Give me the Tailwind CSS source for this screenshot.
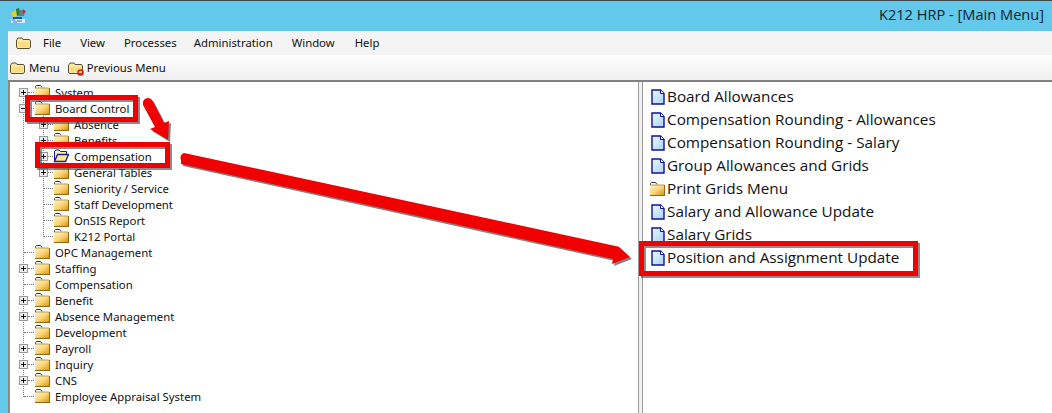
<!DOCTYPE html>
<html lang="en">
<head>
    <meta charset="UTF-8">
    <title>K212 HRP - [Main Menu]</title>
    <script src="https://cdn.jsdelivr.net/npm/@tailwindcss/browser@4"></script>
</head>
<body class="w-[1052px] h-[413px] overflow-hidden bg-white font-['Noto_Sans',sans-serif] text-[11.35px] text-[#111] relative">
    <svg class="absolute w-0 h-0">
        <defs>
            <linearGradient id="fg" x1="0" y1="0" x2="1" y2="1">
                <stop offset="0" stop-color="#fff6cf"/>
                <stop offset="0.5" stop-color="#fbd67a"/>
                <stop offset="1" stop-color="#d9930f"/>
            </linearGradient>
            <linearGradient id="pg" x1="0" y1="0" x2="1" y2="1">
                <stop offset="0" stop-color="#eef8ff"/>
                <stop offset="1" stop-color="#a6d4f2"/>
            </linearGradient>
            <symbol id="folder" viewBox="0 0 16 14">
                <path d="M1.500 3.500V1.500L2.500 .5h4l1.500 2" fill="#fff" stroke="#23287e"/>
                <path d="M1 3h14.500v10H1z" fill="url(#fg)"/>
                <path d="M1 13.500h15M15.500 3v10" stroke="#8c6a12"/>
                <path d="M1 3h14" stroke="#b79b52"/>
            </symbol>
            <symbol id="menufolder" viewBox="0 0 15 12">
                <path d="M1 2.500L2 1h4l1 1.500h6.500L14.500 4v6l-1 1.500h-12L.5 10V3z" fill="#fde9a0" stroke="#5a5030"/>
                <path d="M2 5h11v5H2z" fill="#fbdc80"/>
            </symbol>
            <symbol id="page" viewBox="0 0 14 16">
                <path d="M1 1h8.500L13 4.500V15H1z" fill="url(#pg)" stroke="#10109a" stroke-width="1.400"/>
                <path d="M9.500 1v3.500H13" fill="#fff" stroke="#10109a"/>
            </symbol>
            <symbol id="plus" viewBox="0 0 9 9">
                <rect x=".5" y=".5" width="8" height="8" fill="#eee" stroke="#999"/>
                <path d="M2 4.500h5M4.500 2v5" stroke="#111"/>
            </symbol>
            <symbol id="minus" viewBox="0 0 9 9">
                <rect x=".5" y=".5" width="8" height="8" fill="#eee" stroke="#999"/>
                <path d="M2 4.500h5" stroke="#111"/>
            </symbol>
        </defs>
    </svg>

    <!-- title bar -->
    <div class="h-[31px] bg-[#63c9ea] border-t border-[#3c4a50] flex items-center justify-end pr-[8px] pb-[2px] relative">
        <svg class="absolute left-[10px] top-[6px] w-[17px] h-[17px]" viewBox="0 0 17 17">
            <rect x="1" y="12" width="14" height="4" fill="#dfe8f5"/>
            <path d="M2 13h3M7 14h5M3 15h4" stroke="#3a6fd0"/>
            <path d="M1 6l5-3 2 5-4 3z" fill="#e8d020"/>
            <path d="M6 2l3-1 1 7-3 1z" fill="#2a7a2a"/>
            <path d="M9 3h6l-1 6H9z" fill="#6a7a90"/>
            <path d="M13 2l3 3-3 2z" fill="#e02020"/>
            <path d="M3 10h9v2H3z" fill="#2050c0"/>
        </svg>
        <span class="font-['Open_Sans',sans-serif] text-[14.6px] text-[#123]">K212 HRP - [Main Menu]</span>
    </div>

    <div class="flex h-[382px]">
        <div class="w-[8px] bg-[#63c9ea]"></div>
        <div class="flex-1 flex flex-col">
            <!-- menu bar -->
            <div class="h-[24px] bg-[#f4f4f4] flex items-center pl-[8px]">
                <svg class="w-[15px] h-[12px] mr-[12px]"><use href="#menufolder"/></svg>
                <span class="mr-[19px]">File</span>
                <span class="mr-[19px]">View</span>
                <span class="mr-[17px]">Processes</span>
                <span class="mr-[19px]">Administration</span>
                <span class="mr-[20px]">Window</span>
                <span>Help</span>
            </div>
            <!-- tool bar -->
            <div class="h-[25px] bg-gradient-to-b from-white to-[#efefef] flex items-center">
                <svg class="w-[15px] h-[12px] ml-[2px] mr-[4px]"><use href="#menufolder"/></svg>
                <span class="mr-[8px]">Menu</span>
                <span class="relative mr-[4px]">
                    <svg class="w-[15px] h-[12px] block"><use href="#menufolder"/></svg>
                    <svg class="absolute left-[9px] top-[7px] w-[7px] h-[7px]" viewBox="0 0 7 7"><circle cx="3.500" cy="3.500" r="2.500" fill="none" stroke="#e01010" stroke-width="1.500"/></svg>
                </span>
                <span>Previous Menu</span>
            </div>
            <div class="h-[2px] bg-[#808080]"></div>

            <div class="flex-1 flex">
                <!-- tree -->
                <div class="w-[630px] border-l-2 border-[#8a8a8a] pt-[2px] relative">
                    <svg class="absolute left-0 top-0 w-[120px] h-[330px]" fill="none" stroke="#777" stroke-dasharray="1 1">
                        <path d="M13.500 10V315"/>
                        <path d="M33.500 34V155"/>
                    </svg>
                    <div class="h-4 flex items-center pl-[9px]">
                        <svg class="w-[9px] h-[9px] relative"><use href="#plus"/></svg>
                        <span class="w-[6px] border-t border-dotted border-[#777]"></span>
                        <svg class="w-[16px] h-[14px] mr-[5px]"><use href="#folder"/></svg>System
                    </div>
                    <div class="h-4 flex items-center pl-[9px]">
                        <svg class="w-[9px] h-[9px] relative"><use href="#minus"/></svg>
                        <span class="w-[6px] border-t border-dotted border-[#777]"></span>
                        <svg class="w-[16px] h-[14px] mr-[5px]"><use href="#folder"/></svg>Board Control
                    </div>
                    <div class="h-4 flex items-center pl-[29px]">
                        <svg class="w-[9px] h-[9px] relative"><use href="#plus"/></svg>
                        <span class="w-[5px] border-t border-dotted border-[#777]"></span>
                        <svg class="w-[16px] h-[14px] mr-[5px]"><use href="#folder"/></svg>Absence
                    </div>
                    <div class="h-4 flex items-center pl-[29px]">
                        <svg class="w-[9px] h-[9px] relative"><use href="#plus"/></svg>
                        <span class="w-[5px] border-t border-dotted border-[#777]"></span>
                        <svg class="w-[16px] h-[14px] mr-[5px]"><use href="#folder"/></svg>Benefits
                    </div>
                    <div class="h-4 flex items-center pl-[29px]">
                        <svg class="w-[9px] h-[9px] relative"><use href="#plus"/></svg>
                        <span class="w-[5px] border-t border-dotted border-[#777]"></span>
                        <svg class="w-[16px] h-[14px] mr-[5px]" viewBox="0 0 16 14">
                            <path d="M1.500 12.500V2.500L3 1h3l1.500 1.500h6v3" fill="#fff3b0" stroke="#1a1a9a"/>
                            <path d="M1.500 12.500L4.500 5.500h11l-3 7z" fill="#ffe88a" stroke="#1a1a9a" stroke-width="1.300"/>
                        </svg>Compensation
                    </div>
                    <div class="h-4 flex items-center pl-[29px]">
                        <svg class="w-[9px] h-[9px] relative"><use href="#plus"/></svg>
                        <span class="w-[5px] border-t border-dotted border-[#777]"></span>
                        <svg class="w-[16px] h-[14px] mr-[5px]"><use href="#folder"/></svg>General Tables
                    </div>
                    <div class="h-4 flex items-center pl-[34px]">
                        <span class="w-[9px] border-t border-dotted border-[#777]"></span>
                        <svg class="w-[16px] h-[14px] mr-[5px]"><use href="#folder"/></svg>Seniority / Service
                    </div>
                    <div class="h-4 flex items-center pl-[34px]">
                        <span class="w-[9px] border-t border-dotted border-[#777]"></span>
                        <svg class="w-[16px] h-[14px] mr-[5px]"><use href="#folder"/></svg>Staff Development
                    </div>
                    <div class="h-4 flex items-center pl-[34px]">
                        <span class="w-[9px] border-t border-dotted border-[#777]"></span>
                        <svg class="w-[16px] h-[14px] mr-[5px]"><use href="#folder"/></svg>OnSIS Report
                    </div>
                    <div class="h-4 flex items-center pl-[34px]">
                        <span class="w-[9px] border-t border-dotted border-[#777]"></span>
                        <svg class="w-[16px] h-[14px] mr-[5px]"><use href="#folder"/></svg>K212 Portal
                    </div>
                    <div class="h-4 flex items-center pl-[14px]">
                        <span class="w-[10px] border-t border-dotted border-[#777]"></span>
                        <svg class="w-[16px] h-[14px] mr-[5px]"><use href="#folder"/></svg>OPC Management
                    </div>
                    <div class="h-4 flex items-center pl-[9px]">
                        <svg class="w-[9px] h-[9px] relative"><use href="#plus"/></svg>
                        <span class="w-[6px] border-t border-dotted border-[#777]"></span>
                        <svg class="w-[16px] h-[14px] mr-[5px]"><use href="#folder"/></svg>Staffing
                    </div>
                    <div class="h-4 flex items-center pl-[14px]">
                        <span class="w-[10px] border-t border-dotted border-[#777]"></span>
                        <svg class="w-[16px] h-[14px] mr-[5px]"><use href="#folder"/></svg>Compensation
                    </div>
                    <div class="h-4 flex items-center pl-[9px]">
                        <svg class="w-[9px] h-[9px] relative"><use href="#plus"/></svg>
                        <span class="w-[6px] border-t border-dotted border-[#777]"></span>
                        <svg class="w-[16px] h-[14px] mr-[5px]"><use href="#folder"/></svg>Benefit
                    </div>
                    <div class="h-4 flex items-center pl-[9px]">
                        <svg class="w-[9px] h-[9px] relative"><use href="#plus"/></svg>
                        <span class="w-[6px] border-t border-dotted border-[#777]"></span>
                        <svg class="w-[16px] h-[14px] mr-[5px]"><use href="#folder"/></svg>Absence Management
                    </div>
                    <div class="h-4 flex items-center pl-[14px]">
                        <span class="w-[10px] border-t border-dotted border-[#777]"></span>
                        <svg class="w-[16px] h-[14px] mr-[5px]"><use href="#folder"/></svg>Development
                    </div>
                    <div class="h-4 flex items-center pl-[9px]">
                        <svg class="w-[9px] h-[9px] relative"><use href="#plus"/></svg>
                        <span class="w-[6px] border-t border-dotted border-[#777]"></span>
                        <svg class="w-[16px] h-[14px] mr-[5px]"><use href="#folder"/></svg>Payroll
                    </div>
                    <div class="h-4 flex items-center pl-[9px]">
                        <svg class="w-[9px] h-[9px] relative"><use href="#plus"/></svg>
                        <span class="w-[6px] border-t border-dotted border-[#777]"></span>
                        <svg class="w-[16px] h-[14px] mr-[5px]"><use href="#folder"/></svg>Inquiry
                    </div>
                    <div class="h-4 flex items-center pl-[9px]">
                        <svg class="w-[9px] h-[9px] relative"><use href="#plus"/></svg>
                        <span class="w-[6px] border-t border-dotted border-[#777]"></span>
                        <svg class="w-[16px] h-[14px] mr-[5px]"><use href="#folder"/></svg>CNS
                    </div>
                    <div class="h-4 flex items-center pl-[14px]">
                        <span class="w-[10px] border-t border-dotted border-[#777]"></span>
                        <svg class="w-[16px] h-[14px] mr-[5px]"><use href="#folder"/></svg>Employee Appraisal System
                    </div>
                </div>
                <!-- splitter -->
                <div class="w-[5px] border-x border-[#9a9a9a] bg-[#f0f0f0]"></div>
                <!-- right list -->
                <div class="flex-1 pl-[8px] pt-[3px] text-[15.3px] font-['Open_Sans',sans-serif]">
                    <div class="h-[23px] flex items-center"><svg class="w-[14px] h-[16px] mr-[2px]"><use href="#page"/></svg>Board Allowances</div>
                    <div class="h-[23px] flex items-center"><svg class="w-[14px] h-[16px] mr-[2px]"><use href="#page"/></svg>Compensation Rounding - Allowances</div>
                    <div class="h-[23px] flex items-center"><svg class="w-[14px] h-[16px] mr-[2px]"><use href="#page"/></svg>Compensation Rounding - Salary</div>
                    <div class="h-[23px] flex items-center"><svg class="w-[14px] h-[16px] mr-[2px]"><use href="#page"/></svg>Group Allowances and Grids</div>
                    <div class="h-[23px] flex items-center"><svg class="w-[16px] h-[14px] -ml-[2px] mr-[2px]"><use href="#folder"/></svg>Print Grids Menu</div>
                    <div class="h-[23px] flex items-center"><svg class="w-[14px] h-[16px] mr-[2px]"><use href="#page"/></svg>Salary and Allowance Update</div>
                    <div class="h-[23px] flex items-center"><svg class="w-[14px] h-[16px] mr-[2px]"><use href="#page"/></svg>Salary Grids</div>
                    <div class="h-[23px] flex items-center"><svg class="w-[14px] h-[16px] mr-[2px]"><use href="#page"/></svg>Position and Assignment Update</div>
                </div>
            </div>
        </div>
    </div>

    <!-- red annotations drawn on the screenshot -->
    <svg class="absolute left-0 top-0 w-[1052px] h-[413px] pointer-events-none">
        <g fill="none" stroke="#505050" stroke-width="5" opacity=".65">
            <rect x="29.500" y="99.500" width="108" height="22"/>
            <rect x="39.500" y="146.500" width="130" height="21"/>
            <rect x="643.500" y="245.500" width="274" height="30"/>
        </g>
        <g fill="none" stroke="#f00000" stroke-width="5">
            <rect x="27.500" y="97.500" width="108" height="22"/>
            <rect x="37.500" y="144.500" width="130" height="21"/>
            <rect x="641.500" y="243.500" width="274" height="30"/>
        </g>
        <g fill="#404040" opacity=".65" transform="translate(2 2)">
            <path d="M143 103a5 5 0 0 1 9-3l12 23 5-2-1 19-18-11 5-2-12-22z"/>
            <path d="M181 160a5 5 0 0 1 3-7l436 94-1-0 11 10-18 7 1-5-432-95z"/>
        </g>
        <g fill="#f00000">
            <path d="M143 103a5 5 0 0 1 9-3l12 23 5-2-1 19-18-11 5-2-12-22z"/>
            <path d="M181 160a5 5 0 0 1 3-7l436 94-1-0 11 10-18 7 1-5-432-95z"/>
        </g>
    </svg>
</body>
</html>
